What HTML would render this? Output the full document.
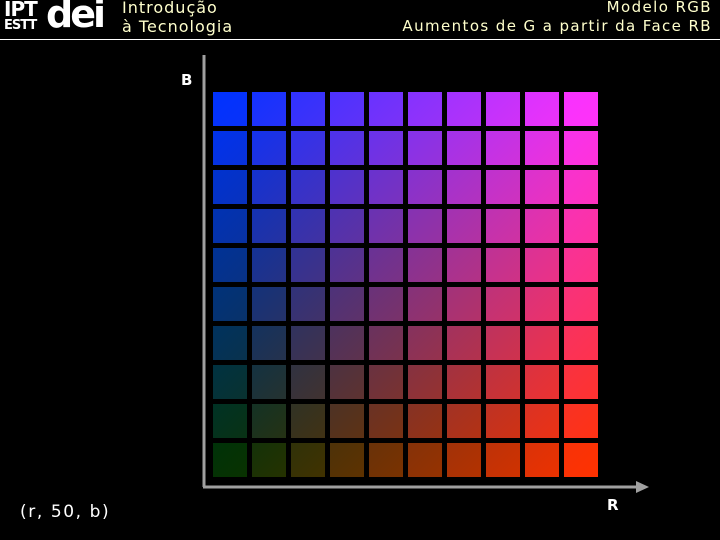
<!DOCTYPE html><html><head><style>
body{margin:0;width:720px;height:540px;background:#000;position:relative;overflow:hidden;font-family:"DejaVu Sans","Liberation Sans",sans-serif}
.t{position:absolute;white-space:nowrap}
.sq{position:absolute;width:34px;height:34px}
</style></head><body>
<div class="t" style="left:4px;top:-1px;color:#fff;font:bold 20px 'DejaVu Sans';letter-spacing:-1px;line-height:20px">IPT</div>
<div class="t" style="left:4px;top:19px;color:#fff;font:bold 13px 'DejaVu Sans';letter-spacing:-1px;line-height:14px">ESTT</div>
<div class="t" style="left:46px;top:-6px;color:#fff;font:bold 38px 'DejaVu Sans';letter-spacing:-3px;line-height:40px">dei</div>
<div class="t" style="left:122px;top:-2px;color:#ffffcc;font-size:16px;letter-spacing:1px;line-height:19px">Introdução<br>à Tecnologia</div>
<div class="t" style="right:8px;top:-2px;color:#ffffcc;font-size:15px;letter-spacing:1.4px;line-height:19px;text-align:right">Modelo RGB<br>Aumentos de G a partir da Face RB</div>
<div style="position:absolute;left:0;top:39px;width:720px;height:1px;background:#fff"></div>
<div class="t" style="left:181px;top:71px;color:#fff;font-weight:bold;font-size:15px">B</div>
<div class="t" style="left:607px;top:496px;color:#fff;font-weight:bold;font-size:15px">R</div>
<div class="t" style="left:20px;top:502px;color:#fff;font-size:17px;letter-spacing:1.6px">(r, 50, b)</div>
<svg style="position:absolute;left:0;top:0" width="720" height="540">
<line x1="204" y1="55" x2="204" y2="487" stroke="#a0a0a0" stroke-width="3"/>
<line x1="203" y1="487" x2="638" y2="487" stroke="#a0a0a0" stroke-width="3"/>
<polygon points="649,487 636,481 636,493" fill="#a0a0a0"/>
</svg>
<div id="g"></div>
<script>
function col(c,r){return 'rgb('+Math.round(Math.min(c,9)*255/9)+',50,'+Math.round(Math.max(0,9-r)*255/9)+')';}
var h='';for(var r=0;r<10;r++)for(var c=0;c<10;c++){h+='<div class="sq" style="left:'+(213+c*39)+'px;top:'+(92+r*39)+'px;background:linear-gradient(135deg,'+col(c-0.3,r-0.3)+','+col(c+0.3,r+0.3)+')"></div>';}
document.getElementById('g').innerHTML=h;
</script>
</body></html>
